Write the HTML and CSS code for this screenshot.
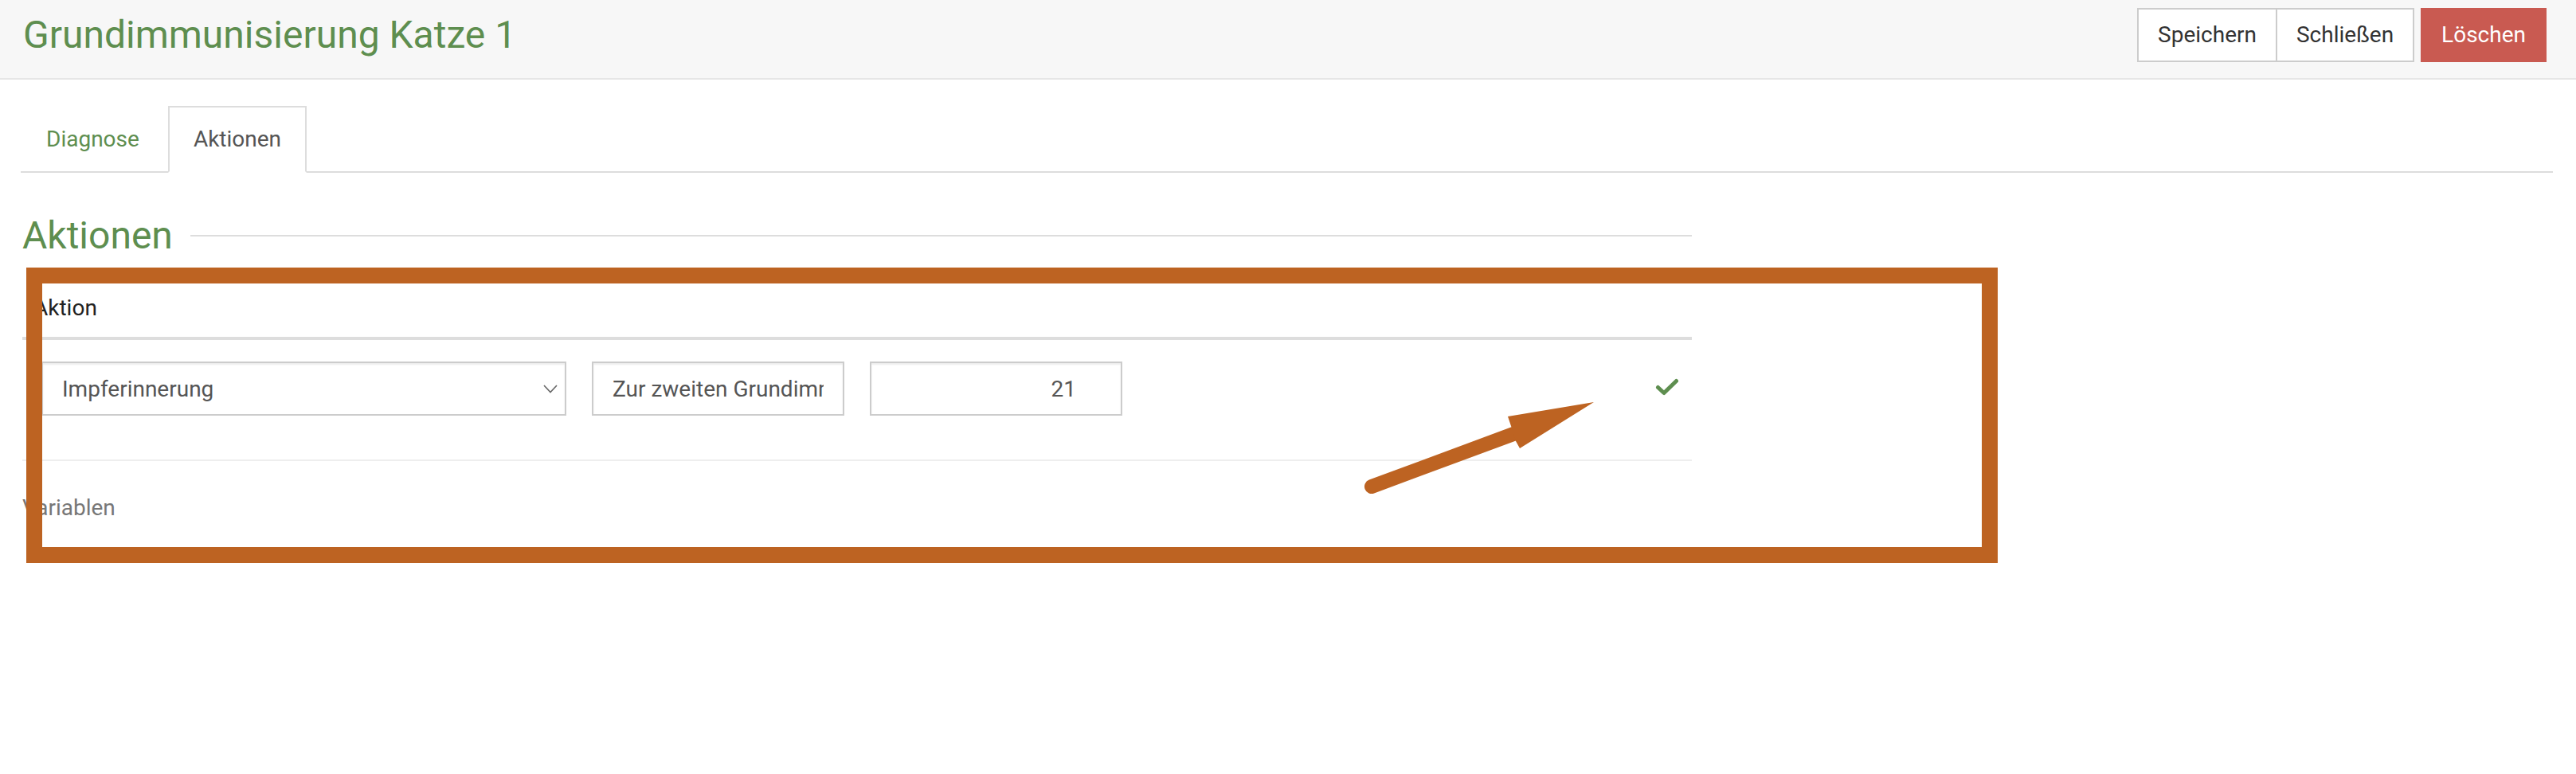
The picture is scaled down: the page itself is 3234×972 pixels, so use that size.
FILE: index.html
```html
<!DOCTYPE html>
<html lang="de">
<head>
<meta charset="utf-8">
<title>Grundimmunisierung Katze 1</title>
<link rel="stylesheet" href="styles.css">
</head>
<body>
<header class="topbar">
  <h1 class="page-title">Grundimmunisierung Katze 1</h1>
  <div class="actions">
    <div class="btn-group">
      <button class="btn">Speichern</button>
      <button class="btn">Schließen</button>
    </div>
    <button class="btn btn-danger">Löschen</button>
  </div>
</header>
<main class="content">
  <ul class="tabs">
    <li class="tab"><a class="tab-link">Diagnose</a></li>
    <li class="tab active"><a class="tab-link">Aktionen</a></li>
  </ul>
  <section class="section">
    <h2 class="section-title">Aktionen</h2>
    <div class="table">
      <div class="thead">Aktion</div>
      <div class="trow">
        <div class="select">
          <span class="select-value">Impferinnerung</span>
          <svg class="chevron" width="18" height="11" viewBox="0 0 18 11"><polyline points="1,1 9,9.5 17,1" fill="none" stroke="#666" stroke-width="1.6"/></svg>
        </div>
        <input class="field" type="text" value="Zur zweiten Grundimmunisierung" readonly>
        <input class="field num" type="text" value="21" readonly>
        <svg class="check" width="30" height="23" viewBox="0 0 30 23"><polyline points="3.5,12.5 11,19.5 26.5,4.5" fill="none" stroke="#5e8e4f" stroke-width="5" stroke-linecap="round" stroke-linejoin="round"/></svg>
      </div>
    </div>
    <div class="variables">Variablen</div>
  </section>
</main>
<div class="annotation-box"></div>
<svg class="annotation-arrow" width="320" height="130" viewBox="0 0 320 130">
  <line x1="32" y1="116" x2="210" y2="50" stroke="#bd6322" stroke-width="18" stroke-linecap="round"/>
  <polygon points="207,40 203,28 311,10 218,68 213,59" fill="#bd6322"/>
</svg>
</body>
</html>
```

FILE: styles.css
```css
* {
  box-sizing: border-box;
}

html, body {
  margin: 0;
  padding: 0;
  background: #ffffff;
}

body {
  font-family: Roboto, "Liberation Sans", Arial, sans-serif;
  font-size: 28px;
  color: #333333;
  width: 3234px;
  min-height: 972px;
}

.topbar {
  display: flex;
  align-items: center;
  justify-content: space-between;
  height: 100px;
  padding: 0 37px 10px 29px;
  background: #f7f7f7;
  border-bottom: 2px solid #e6e6e6;
}

.page-title {
  margin: 0;
  font-size: 48px;
  font-weight: 400;
  line-height: 58px;
  color: #5e8e4f;
}

.actions {
  display: flex;
  align-items: center;
}

.btn-group {
  display: flex;
}

.btn {
  height: 68px;
  padding: 0 24px;
  font-family: Roboto, "Liberation Sans", Arial, sans-serif;
  font-size: 28px;
  line-height: 40px;
  color: #333333;
  background: #ffffff;
  border: 2px solid #cccccc;
  border-radius: 0;
  margin: 0;
}

.btn-group .btn + .btn {
  margin-left: -2px;
}

.btn-danger {
  margin-left: 8px;
  color: #ffffff;
  background: #c95a51;
  border-color: #c95a51;
}

.content {
  padding: 0 29px 0 26px;
}

.tabs {
  display: flex;
  list-style: none;
  margin: 33px 0 0 0;
  padding: 0;
  border-bottom: 2px solid #dddddd;
}

.tab {
  margin-right: 4px;
  margin-bottom: -2px;
}

.tab-link {
  display: block;
  padding: 20px 30px;
  line-height: 40px;
  font-size: 28px;
  color: #5e8e4f;
  border: 2px solid transparent;
}

.tab.active .tab-link {
  color: #555555;
  background: #ffffff;
  border-color: #dddddd #dddddd transparent #dddddd;
}

.section {
  width: 2098px;
  padding-left: 2px;
}

.section-title {
  display: flex;
  align-items: center;
  margin: 51px 0 0 0;
  font-size: 48px;
  font-weight: 400;
  line-height: 56px;
  color: #5e8e4f;
}

.section-title::after {
  content: "";
  flex: 1;
  margin-left: 22px;
  border-top: 2px solid #dddddd;
}

.table {
  margin-top: 28px;
}

.thead {
  padding: 15px 14px 16px 14px;
  line-height: 40px;
  color: #222222;
  border-bottom: 4px solid #dddddd;
}

.trow {
  display: flex;
  align-items: center;
  gap: 32px;
  padding: 27px 16px 55px 24px;
  border-bottom: 2px solid #eeeeee;
}

.select,
.field {
  height: 68px;
  border: 2px solid #cccccc;
  background: #ffffff;
  box-shadow: inset 0 2px 2px rgba(0, 0, 0, 0.075);
  font-family: Roboto, "Liberation Sans", Arial, sans-serif;
  font-size: 28px;
  color: #555555;
}

.select {
  display: flex;
  align-items: center;
  justify-content: space-between;
  width: 659px;
  padding: 0 9px 0 24px;
}

.chevron {
  display: block;
}

.field {
  width: 317px;
  padding: 0 24px;
  margin: 0;
  border-radius: 0;
  outline: none;
}

.field.num {
  text-align: right;
  padding-right: 56px;
}

.check {
  display: block;
  margin-left: auto;
  margin-top: -5px;
}

.variables {
  margin-top: 39px;
  line-height: 40px;
  color: #777777;
}

.annotation-box {
  position: absolute;
  left: 33px;
  top: 336px;
  width: 2475px;
  height: 371px;
  border: 20px solid #bd6322;
  pointer-events: none;
}

.annotation-arrow {
  position: absolute;
  left: 1690px;
  top: 495px;
  pointer-events: none;
}
```
